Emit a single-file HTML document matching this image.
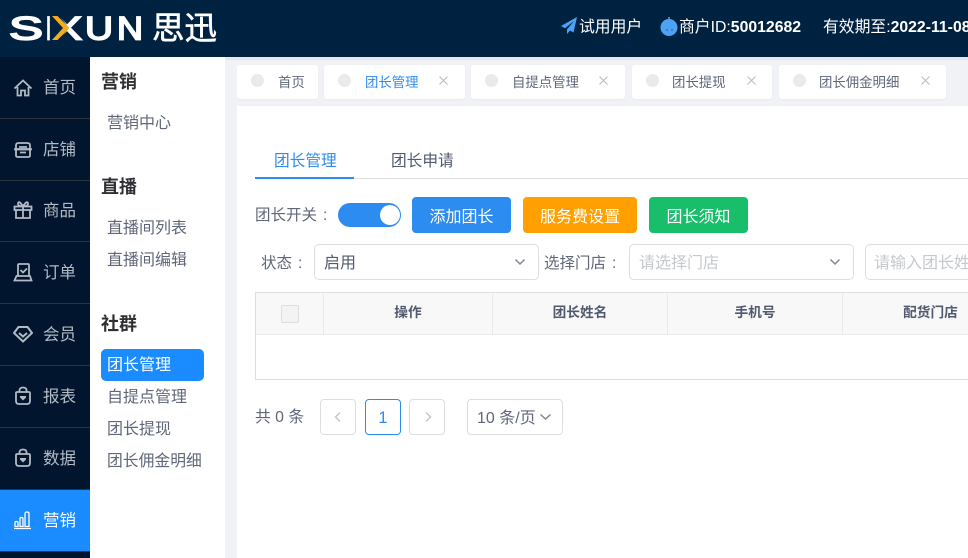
<!DOCTYPE html>
<html lang="zh"><head><meta charset="utf-8"><title>团长管理</title>
<style>
*{box-sizing:border-box}
html,body{margin:0;padding:0;width:968px;height:558px;overflow:hidden;background:#f0f2f6}
body{position:relative;font-family:"Liberation Sans","Noto Sans CJK SC",sans-serif;color:#515a6e}
.a{position:absolute;white-space:nowrap}
.t{position:absolute;white-space:nowrap;line-height:20px;height:20px}
.nav{position:absolute;left:0;width:90px;height:62px;border-bottom:1px solid #2c3440}
.nav span{position:absolute;left:43px;top:20px;font-size:16.5px;line-height:22px;color:#b3bac4;white-space:nowrap}
.nav svg{position:absolute;left:13px;top:20px}
.sub{left:107px;font-size:16px;color:#5f6779}
.head{left:101px;font-size:18px;font-weight:700;color:#2f3033}
.tab{position:absolute;top:65px;height:34px;background:#fff;border-radius:3px;box-shadow:0 1px 1px #e8eaee}
.tab i{position:absolute;left:14px;top:9px;width:13px;height:13px;border-radius:50%;background:#e8eaec}
.tab b{position:absolute;left:41px;top:8px;font-weight:400;font-size:13.4px;line-height:20px;color:#5f6779;white-space:nowrap}
.tab svg{position:absolute;top:10px}
.btn{position:absolute;top:197px;height:36px;border-radius:4px;color:#fff;font-size:16px;line-height:42px;text-align:center;overflow:hidden}
.box{position:absolute;top:244px;height:36px;border:1px solid #dcdee2;border-radius:5px;background:#fff;font-size:16px;line-height:37px;padding-left:9px;white-space:nowrap}
.box svg{position:absolute;right:12px;top:13px}
.th{position:absolute;top:293px;height:41px;line-height:39px;text-align:center;font-size:13.7px;font-weight:700;color:#515a6e;border-right:1px solid #e8eaec;white-space:nowrap}
.pg{position:absolute;top:399px;height:36px;width:36px;border:1px solid #dcdee2;border-radius:4px;background:#fff;text-align:center;line-height:36px;font-size:16.5px}
.lb{position:absolute;white-space:nowrap;line-height:20px;height:20px;font-size:15.5px;color:#606778}
.lb u{position:absolute;text-decoration:none;top:0}
</style></head><body>

<div class="a" style="left:0;top:0;width:968px;height:57px;background:#002241"></div>
<svg class="a" style="left:0;top:0" width="225" height="57">
<defs><clipPath id="xr"><path d="M58 14h26v28H58l11-14z"/></clipPath></defs>
<g font-family="Liberation Sans" font-size="32" fill="#fff" stroke="#fff" stroke-width="1.700">
<text x="9" y="39.500" textLength="34" lengthAdjust="spacingAndGlyphs">S</text>
<text x="46" y="39.500" textLength="5" lengthAdjust="spacingAndGlyphs">I</text>
<text x="52" y="39.500" textLength="30" lengthAdjust="spacingAndGlyphs" clip-path="url(#xr)">X</text>
<text x="85" y="39.500" textLength="28" lengthAdjust="spacingAndGlyphs">U</text>
<text x="117" y="39.500" textLength="26" lengthAdjust="spacingAndGlyphs">N</text>
</g>
<path d="M52 16h5.500l12 12-12 12H52l11-12z" fill="#f5ab1b"/>
<text x="152" y="39" font-family="Noto Sans CJK SC" font-size="32" fill="#fff" stroke="#fff" stroke-width=".6" textLength="65" lengthAdjust="spacingAndGlyphs">思迅</text>
</svg>

<svg class="a" style="left:560px;top:16px" width="18" height="19" viewBox="0 0 18 19"><path d="M17 1 1 10l4 2.200L14 5 7 13.500V18l3-3.500 3.500 2z" fill="#4ea2f5"/></svg>
<div class="t" style="left:579px;top:18px;font-size:15.8px;color:#fff">试用用户</div>
<svg class="a" style="left:660px;top:16px" width="18" height="20" viewBox="0 0 18 20"><circle cx="9" cy="11.500" r="8.500" fill="#4ea2f5"/><path d="M9 3V1" stroke="#4ea2f5" stroke-width="1.500"/><circle cx="7" cy="14" r=".6" fill="#0b2d50"/><circle cx="12" cy="14" r=".6" fill="#0b2d50"/></svg>
<div class="t" style="left:679px;top:18px;font-size:15.8px;color:#fff">商户ID:<b>50012682</b></div>
<div class="t" style="left:823px;top:18px;font-size:15.8px;color:#fff">有效期至:<b>2022-11-08</b></div>

<div class="a" style="left:0;top:57px;width:90px;height:501px;background:#01152e"></div>
<div class="nav" style="top:57px"><svg width="20" height="22" viewBox="0 0 20 22" fill="none" stroke="#b3bac4" stroke-width="1.800"><path d="M1.500 11.500 10 3.500l8.500 8M4.500 10v8.500h3.500v-5h4v5h3.500V10"/></svg><span>首页</span></div>
<div class="nav" style="top:119px"><svg width="20" height="22" viewBox="0 0 20 22" fill="none" stroke="#b3bac4" stroke-width="1.800"><path d="M3 10V6.500Q3 4 5.500 4h9Q17 4 17 6.500V10M2 10h16v.5H2zM3 11v5.500Q3 18 5 18h10q2 0 2-1.500V11M6 8h8M7 13.500h6"/></svg><span>店铺</span></div>
<div class="nav" style="top:181px;height:61px"><svg style="top:18px" width="20" height="22" viewBox="0 0 20 22" fill="none" stroke="#b3bac4" stroke-width="1.800"><path d="M1.500 7.500h17v3.500h-17zM3 11v8h14v-8M10 7.500V19M10 7 7 3.500Q5 2.500 5 5q0 2 5 2.500 5-.5 5-2.500 0-2.500-2-1.500z"/></svg><span style="top:19px">商品</span></div>
<div class="nav" style="top:242px"><svg style="top:19px" width="20" height="22" viewBox="0 0 20 22" fill="none" stroke="#b3bac4" stroke-width="1.800"><path d="M5 15V4q0-1 1-1h9q1 0 1 1v11M1.500 19.500 3.500 15h13.500l1.500 4.500zM7.500 9l2.500 2.500 4-4"/></svg><span>订单</span></div>
<div class="nav" style="top:304px"><svg style="top:19px" width="20" height="22" viewBox="0 0 20 22" fill="none" stroke="#b3bac4" stroke-width="2"><path d="M5.500 4h9l4.500 6-9 8.500L1 10zM6 10l4 3.500 4-3.500"/></svg><span>会员</span></div>
<div class="nav" style="top:366px"><svg style="top:19px" width="20" height="22" viewBox="0 0 20 22" fill="none" stroke="#b3bac4" stroke-width="1.800"><path d="M6.500 7V5.500Q6.500 2.500 10 2.500t3.500 3V7M4 7h12q1 0 1 1v8q0 3-3 3H6q-3 0-3-3V8q0-1 1-1z"/><path d="M7 11h6v1.500L10 15.500 7 12.500z" fill="#b3bac4" stroke="none"/></svg><span>报表</span></div>
<div class="nav" style="top:428px"><svg style="top:19px" width="20" height="22" viewBox="0 0 20 22" fill="none" stroke="#b3bac4" stroke-width="1.800"><path d="M6.500 7V5.500Q6.500 2.500 10 2.500t3.500 3V7M4 7h12q1 0 1 1v8q0 3-3 3H6q-3 0-3-3V8q0-1 1-1z"/><path d="M7 11h6v1.500L10 15.500 7 12.500z" fill="#b3bac4" stroke="none"/></svg><span>数据</span></div>
<div class="nav" style="top:490px;background:#1a8cff"><svg style="top:19px" width="20" height="22" viewBox="0 0 20 22" fill="none" stroke="#fff" stroke-width="1.300"><path d="M1 19.500h17M2 17.500v-4q0-1 1.500-1t1.500 1v4zM7 17.500v-8q0-1 1.500-1t1.500 1v8zM12 17.500V4.500q0-1.500 2-1.500t2 1.500v13z"/></svg><span style="color:#fff">营销</span></div>

<div class="a" style="left:90px;top:57px;width:135px;height:501px;background:#fff"></div>
<div class="t head" style="top:72px">营销</div>
<div class="t sub" style="top:114px">营销中心</div>
<div class="t head" style="top:177px">直播</div>
<div class="t sub" style="top:219px">直播间列表</div>
<div class="t sub" style="top:251px">直播间编辑</div>
<div class="t head" style="top:314px">社群</div>
<div class="a" style="left:101px;top:349px;width:103px;height:32px;background:#1a8cff;border-radius:5px"></div>
<div class="t sub" style="top:356px;color:#fff">团长管理</div>
<div class="t sub" style="top:388px">自提点管理</div>
<div class="t sub" style="top:420px">团长提现</div>
<div class="t sub" style="top:452px;font-size:15.8px">团长佣金明细</div>

<div class="a" style="left:225px;top:57px;width:743px;height:3px;background:#e5e7eb"></div>
<div class="tab" style="left:237px;width:81px"><i></i><b>首页</b></div>
<div class="tab" style="left:324px;width:141px"><i></i><b style="color:#2d8cf0">团长管理</b><svg style="left:114px" width="11" height="11" viewBox="0 0 11 11"><path d="M1.500 1.500l8 8m0-8l-8 8" stroke="#b8bbc2" stroke-width="1"/></svg></div>
<div class="tab" style="left:471px;width:154px"><i></i><b>自提点管理</b><svg style="left:127px" width="11" height="11" viewBox="0 0 11 11"><path d="M1.500 1.500l8 8m0-8l-8 8" stroke="#b8bbc2" stroke-width="1"/></svg></div>
<div class="tab" style="left:632px;width:140px"><i></i><b style="left:40px">团长提现</b><svg style="left:114px" width="11" height="11" viewBox="0 0 11 11"><path d="M1.500 1.500l8 8m0-8l-8 8" stroke="#b8bbc2" stroke-width="1"/></svg></div>
<div class="tab" style="left:779px;width:167px"><i></i><b style="left:40px">团长佣金明细</b><svg style="left:141px" width="11" height="11" viewBox="0 0 11 11"><path d="M1.500 1.500l8 8m0-8l-8 8" stroke="#b8bbc2" stroke-width="1"/></svg></div>

<div class="a" style="left:237px;top:106px;width:731px;height:452px;background:#fff"></div>
<div class="t" style="left:274px;top:152px;font-size:15.7px;color:#2d8cf0">团长管理</div>
<div class="t" style="left:391px;top:152px;font-size:15.7px;color:#515a6e">团长申请</div>
<div class="a" style="left:255px;top:178px;width:713px;height:1px;background:#dcdee2"></div>
<div class="a" style="left:255px;top:177px;width:99px;height:2px;background:#2d8cf0"></div>

<div class="lb" style="left:255px;top:206px">团长开关<u style="left:68px">:</u></div>
<div class="a" style="left:338px;top:203px;width:63px;height:24px;border-radius:12px;background:#2d8cf0"></div>
<div class="a" style="left:380px;top:205px;width:20px;height:20px;border-radius:50%;background:#fff"></div>
<div class="btn" style="left:412px;width:99px;background:#2d8cf0">添加团长</div>
<div class="btn" style="left:523px;width:114px;background:#ff9f00">服务费设置</div>
<div class="btn" style="left:649px;width:99px;background:#19be6b">团长须知</div>

<div class="lb" style="left:261px;top:254px">状态<u style="left:37px">:</u></div>
<div class="box" style="left:314px;width:225px">启用<svg width="12" height="8" viewBox="0 0 12 8" fill="none" stroke="#808695" stroke-width="1.500"><path d="M1.500 1.500 6 6l4.500-4.500"/></svg></div>
<div class="lb" style="left:544px;top:254px">选择门店<u style="left:68px">:</u></div>
<div class="box" style="left:629px;width:225px;color:#c5c8ce">请选择门店<svg width="12" height="8" viewBox="0 0 12 8" fill="none" stroke="#808695" stroke-width="1.500"><path d="M1.500 1.500 6 6l4.500-4.500"/></svg></div>
<div class="box" style="left:865px;width:140px;padding-left:8px;color:#c5c8ce;overflow:hidden">请输入团长姓名</div>

<div class="a" style="left:255px;top:292px;width:720px;height:88px;border:1px solid #dcdee2;background:#fff"></div>
<div class="a" style="left:256px;top:293px;width:712px;height:42px;background:#f8f8f9;border-bottom:1px solid #e8eaec"></div>
<div class="th" style="left:256px;width:68px"></div>
<div class="a" style="left:281px;top:305px;width:18px;height:18px;border:1px solid #dcdee2;border-radius:2px;background:#f3f3f3"></div>
<div class="th" style="left:324px;width:169px">操作</div>
<div class="th" style="left:493px;width:175px">团长姓名</div>
<div class="th" style="left:668px;width:175px">手机号</div>
<div class="th" style="left:843px;width:175px;border-right:0;padding-right:0">配货门店</div>

<div class="t" style="left:255px;top:408px;font-size:15.8px;color:#606778">共 0 条</div>
<div class="pg" style="left:320px"><svg width="10" height="12" viewBox="0 0 10 12" fill="none" stroke="#c5c8ce" stroke-width="1.500" style="margin-top:11px;display:block;margin-left:12px"><path d="M7 1.500 2.500 6 7 10.500"/></svg></div>
<div class="pg" style="left:365px;border-color:#2d8cf0;color:#2d8cf0">1</div>
<div class="pg" style="left:409px"><svg width="10" height="12" viewBox="0 0 10 12" fill="none" stroke="#c5c8ce" stroke-width="1.500" style="margin-top:11px;display:block;margin-left:13px"><path d="M3 1.500 7.500 6 3 10.500"/></svg></div>
<div class="a" style="left:467px;top:399px;width:96px;height:36px;border:1px solid #dcdee2;border-radius:4px;background:#fff;font-size:16px;line-height:37px;padding-left:9px;color:#606778">10 条/页<svg style="position:absolute;left:71px;top:13px" width="13" height="8" viewBox="0 0 13 8" fill="none" stroke="#808695" stroke-width="1.500"><path d="M1.500 1.500 6.500 6l5-4.500"/></svg></div>
</body></html>
